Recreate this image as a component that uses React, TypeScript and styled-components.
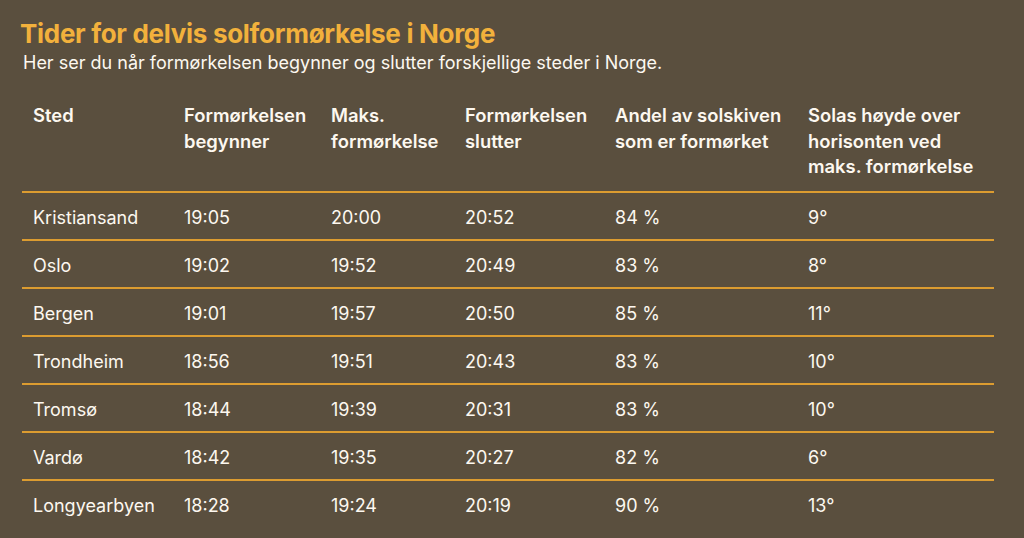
import React from "react";
import styled, { createGlobalStyle } from "styled-components";

const Global = createGlobalStyle`
  html, body { margin: 0; padding: 0; background: #5a4f3e; }
  body { font-family: Inter, "Noto Sans", sans-serif; color: #fdf8f0; }
`;

const Page = styled.div`
  width: 1024px;
  height: 538px;
  box-sizing: border-box;
  padding: 18px 30px 0 20px;
  background: #5a4f3e;
  overflow: hidden;
`;

const Title = styled.h1`
  margin: 0;
  font-size: 26px;
  line-height: 32px;
  font-weight: 700;
  color: #f2b13c;
  letter-spacing: -0.3px;
`;

const Subtitle = styled.p`
  margin: 0 0 0 3px;
  font-size: 18px;
  line-height: 26px;
  font-weight: 400;
`;

const Table = styled.table`
  margin: 14px 0 0 2px;
  width: 972px;
  border-collapse: collapse;
  table-layout: fixed;
`;

const Th = styled.th<{ $w: number }>`
  box-sizing: border-box;
  width: ${(p) => p.$w}px;
  text-align: left;
  vertical-align: top;
  font-size: 18.4px;
  line-height: 25.5px;
  font-weight: 600;
  padding: 13px 4px 11px 11px;
  border-bottom: 2px solid #dc9c30;
`;

const Row = styled.tr`
  &:last-child td { border-bottom: none; }
`;

const Td = styled.td`
  box-sizing: border-box;
  font-size: 18px;
  line-height: 22px;
  font-weight: 400;
  height: 48px;
  padding: 4px 8px 0 11px;
  border-bottom: 2px solid #dc9c30;
  white-space: nowrap;
`;

const headers = [
  { w: 151, t: "Sted" },
  { w: 147, t: "Formørkelsen begynner" },
  { w: 134, t: "Maks. formørkelse" },
  { w: 150, t: "Formørkelsen slutter" },
  { w: 193, t: "Andel av solskiven som er formørket" },
  { w: 197, t: "Solas høyde over horisonten ved maks. formørkelse" },
];

const rows = [
  ["Kristiansand", "19:05", "20:00", "20:52", "84 %", "9°"],
  ["Oslo", "19:02", "19:52", "20:49", "83 %", "8°"],
  ["Bergen", "19:01", "19:57", "20:50", "85 %", "11°"],
  ["Trondheim", "18:56", "19:51", "20:43", "83 %", "10°"],
  ["Tromsø", "18:44", "19:39", "20:31", "83 %", "10°"],
  ["Vardø", "18:42", "19:35", "20:27", "82 %", "6°"],
  ["Longyearbyen", "18:28", "19:24", "20:19", "90 %", "13°"],
];

export default function App() {
  return (
    <>
      <Global />
      <Page>
        <Title>Tider for delvis solformørkelse i Norge</Title>
        <Subtitle>Her ser du når formørkelsen begynner og slutter forskjellige steder i Norge.</Subtitle>
        <Table>
          <thead>
            <tr>
              {headers.map((h) => (
                <Th key={h.t} $w={h.w}>{h.t}</Th>
              ))}
            </tr>
          </thead>
          <tbody>
            {rows.map((r) => (
              <Row key={r[0]}>
                {r.map((c, i) => (
                  <Td key={i}>{c}</Td>
                ))}
              </Row>
            ))}
          </tbody>
        </Table>
      </Page>
    </>
  );
}
